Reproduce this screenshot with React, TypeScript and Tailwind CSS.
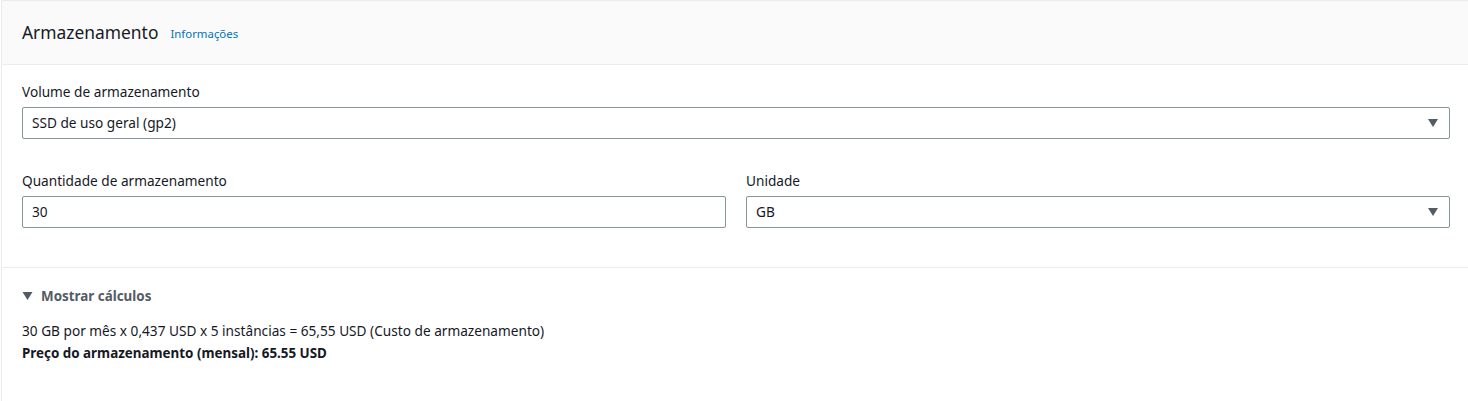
import React from "react";

const Caret = ({ className }: { className?: string }) => (
  <svg viewBox="0 0 10 8" className={className} fill="currentColor">
    <path d="M0 0 H10 L5 8 Z" />
  </svg>
);

const SelectBox = ({ value }: { value: string }) => (
  <div className="h-8 border border-[#879596] rounded-[2px] bg-white flex items-center justify-between pl-[9px] pr-[11px]">
    <span className="text-[13.65px] text-[#16191f]">{value}</span>
    <Caret className="w-[10px] h-[8px] text-[#545b64]" />
  </div>
);

const App: React.FC = () => {
  return (
    <div
      className="min-h-[401px] bg-white text-[#16191f]"
      style={{ fontFamily: '"Noto Sans", "Open Sans", Arial, sans-serif' }}
    >
      <div className="ml-px border-l border-t border-[#eaeded] min-h-[401px]">
        {/* Header */}
        <div className="h-[64px] bg-[#fafafa] border-b border-[#eaeded] flex items-center pl-5 pr-[18px]">
          <h2 className="text-[17.4px] font-normal leading-none">Armazenamento</h2>
          <a className="ml-3 text-[11.4px] text-[#0073bb] mt-[3px]">Informações</a>
        </div>

        {/* Body */}
        <div className="pl-5 pr-[18px] pt-[16px] pb-[39px] border-b border-[#eaeded] text-[13.65px]">
          <div className="leading-[22px] mb-1">Volume de armazenamento</div>
          <SelectBox value="SSD de uso geral (gp2)" />

          <div className="grid grid-cols-2 gap-5 mt-[31px]">
            <div>
              <div className="leading-[22px] mb-1">Quantidade de armazenamento</div>
              <div className="h-8 border border-[#879596] rounded-[2px] flex items-center pl-[9px]">
                30
              </div>
            </div>
            <div>
              <div className="leading-[22px] mb-1">Unidade</div>
              <SelectBox value="GB" />
            </div>
          </div>
        </div>

        {/* Calculations */}
        <div className="pl-5 pr-[18px] pt-[17px] text-[13.65px]">
          <div className="flex items-center gap-2 text-[#545b64]">
            <Caret className="w-[11px] h-[8px]" />
            <span className="font-bold leading-[22px] text-[13.4px]">Mostrar cálculos</span>
          </div>
          <div className="mt-[12px] leading-[23px]">
            <div>30 GB por mês x 0,437 USD x 5 instâncias = 65,55 USD (Custo de armazenamento)</div>
            <div className="font-bold text-[13.4px]">Preço do armazenamento (mensal): 65.55 USD</div>
          </div>
        </div>
      </div>
    </div>
  );
};

export default App;
